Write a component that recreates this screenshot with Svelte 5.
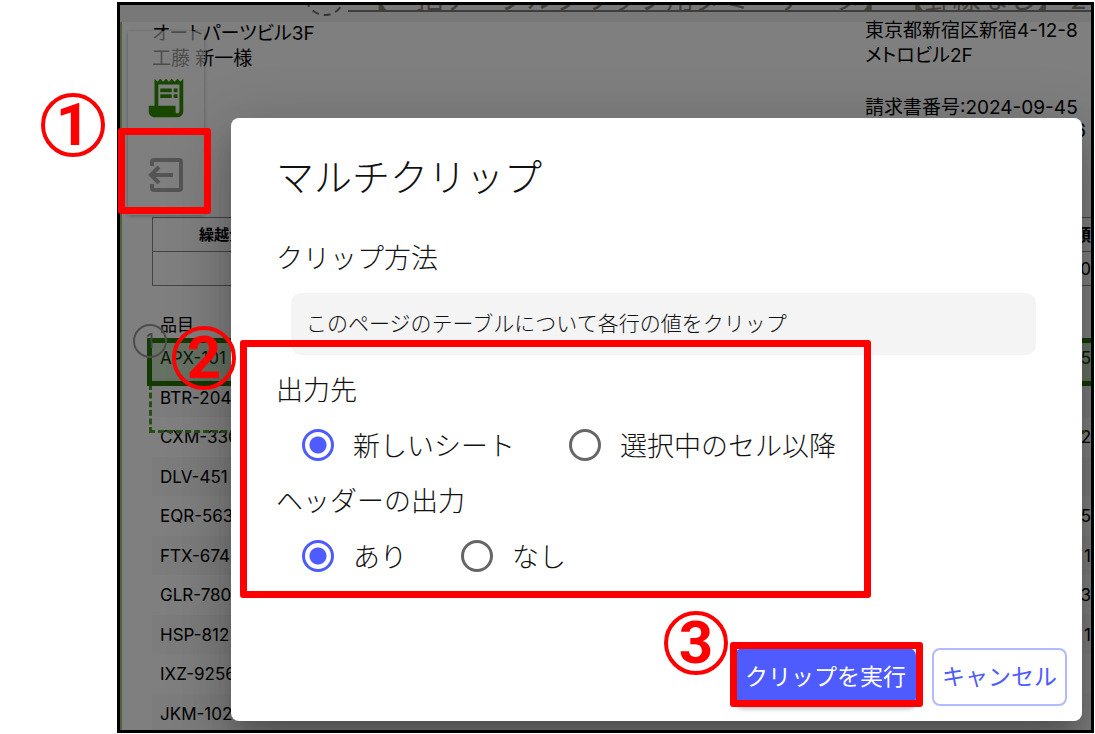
<script lang="ts">
	interface Mark {
		left: number;
		top: number;
		width: number;
		height: number;
	}

	// Red frames and numbered rings are pinned on top of the captured window
	const frames: Mark[] = [
		{ left: 118, top: 128, width: 93, height: 86 },
		{ left: 240, top: 340, width: 631, height: 258 },
		{ left: 730, top: 642, width: 193, height: 65 },
	];

	const steps = [
		{ n: 1, left: 41, top: 93 },
		{ n: 2, left: 172, top: 326 },
		{ n: 3, left: 664, top: 611 },
	];

	const items = [
		{ code: 'APX-101', amount: '5' },
		{ code: 'BTR-204', amount: '' },
		{ code: 'CXM-330', amount: '2' },
		{ code: 'DLV-451', amount: '' },
		{ code: 'EQR-563', amount: '5' },
		{ code: 'FTX-674', amount: '1' },
		{ code: 'GLR-780', amount: '3' },
		{ code: 'HSP-812', amount: '1' },
		{ code: 'IXZ-9256', amount: '' },
		{ code: 'JKM-102', amount: '' },
	];

	let target = $state('new');
	let header = $state('yes');
</script>

<main class="guide">
	<div class="window">
		<div class="topbar">
			<svg class="target" width="40" height="20" viewBox="0 0 40 20" aria-hidden="true">
				<circle cx="20" cy="-9" r="19" fill="none" stroke="#6f6f6f" stroke-width="2" stroke-dasharray="7 5" />
			</svg>
			<div class="doc-title">【一括テーブルクリップ用ダミーデータ】 【罫線なし】 2</div>
		</div>

		<div class="sheet">
			<div class="addresses">
				<div class="client">
					<div>オートパーツビル3F</div>
					<div>工藤 新一様</div>
				</div>
				<div class="sender">
					<div>東京都新宿区新宿4-12-8</div>
					<div>メトロビル2F</div>
					<div class="number">請求書番号:2024-09-45</div>
					<div class="date">2024-09-06</div>
				</div>
			</div>

			<table class="summary">
				<thead>
					<tr><th>繰越金額</th><th class="end">額</th></tr>
				</thead>
				<tbody>
					<tr><td></td><td class="end">0</td></tr>
				</tbody>
			</table>

			<div class="items">
				<table>
					<thead>
						<tr><th>品目</th><th></th></tr>
					</thead>
					<tbody>
						{#each items as item (item.code)}
							<tr><td>{item.code}</td><td class="end">{item.amount}</td></tr>
						{/each}
					</tbody>
				</table>
				<div class="next-rows"></div>
				<div class="picked-row"></div>
				<div class="row-badge">1</div>
			</div>
		</div>

		<div class="toolbar">
			<button type="button" aria-label="請求書">
				<svg width="46" height="46" viewBox="0 0 24 24" aria-hidden="true">
					<path
						fill="#338c00"
						fill-rule="evenodd"
						d="M19.5 3.5 18 2l-1.5 1.5L15 2l-1.5 1.5L12 2l-1.5 1.5L9 2 7.5 3.5 6 2v14H3v3c0 1.66 1.34 3 3 3h12c1.66 0 3-1.34 3-3V2zM19 19c0 .55-.45 1-1 1s-1-.45-1-1v-3H8V5h11zM9 7h6v2H9zM16 7h2v2h-2zM9 10h6v2H9zM16 10h2v2h-2z"
					/>
				</svg>
			</button>
			<button type="button" aria-label="クリップ">
				<svg width="36" height="36" viewBox="0 0 36 36" fill="none" stroke="#a8a8a8" stroke-width="4" aria-hidden="true">
					<path d="M4 9V5q0-2 2-2h25q2 0 2 2v26q0 2-2 2H6q-2 0-2-2v-4" />
					<path d="M25 18H4M11 10l-8 8 8 8" />
				</svg>
			</button>
		</div>

		<div class="scrim"></div>

		<div class="dialog" role="dialog" aria-labelledby="dialog-title">
			<h1 id="dialog-title">マルチクリップ</h1>
			<h2>クリップ方法</h2>
			<p class="method">このページのテーブルについて各行の値をクリップ</p>

			<fieldset>
				<legend>出力先</legend>
				<div class="choices">
					<label><input type="radio" name="target" value="new" bind:group={target} />新しいシート</label>
					<label><input type="radio" name="target" value="selected" bind:group={target} />選択中のセル以降</label>
				</div>
			</fieldset>
			<fieldset>
				<legend>ヘッダーの出力</legend>
				<div class="choices">
					<label><input type="radio" name="header" value="yes" bind:group={header} />あり</label>
					<label><input type="radio" name="header" value="no" bind:group={header} />なし</label>
				</div>
			</fieldset>

			<div class="actions">
				<button type="button" class="run">クリップを実行</button>
				<button type="button" class="cancel">キャンセル</button>
			</div>
		</div>
	</div>

	{#each frames as f}
		<div
			class="frame"
			style:left="{f.left}px"
			style:top="{f.top}px"
			style:width="{f.width}px"
			style:height="{f.height}px"
		></div>
	{/each}
	{#each steps as s (s.n)}
		<div class="step" style:left="{s.left}px" style:top="{s.top}px">{s.n}</div>
	{/each}
</main>

<style>
	:global(body) {
		background: #fff;
	}

	.guide {
		position: relative;
		box-sizing: border-box;
		height: 100vh;
		padding: 2px 1px 1px 117px;
		overflow: hidden;
		font-family: 'Noto Sans CJK JP', 'Noto Sans', sans-serif;
	}

	.guide *,
	.guide *::before {
		box-sizing: border-box;
	}

	.window {
		position: relative;
		height: 100%;
		border: 3px solid #000;
		overflow: hidden;
		background: #fff;
	}

	/* Document behind the dialog */
	.topbar {
		display: flex;
		gap: 3px;
		height: 17px;
		padding-left: 185px;
		background: #f1f1f1;
	}

	.target {
		flex: none;
	}

	.doc-title {
		display: flex;
		flex: 1;
		align-items: flex-end;
		height: 7px;
		padding-left: 12px;
		border-bottom: 2px solid #7c7c7c;
		overflow: hidden;
		font-size: 28px;
		line-height: 26px;
		color: #8b8378;
		white-space: pre;
	}

	.sheet {
		padding-left: 30px;
		border-left: 2px solid #9cc870;
		font-family: Inter, 'Noto Sans CJK JP', sans-serif;
		color: #000;
	}

	.addresses {
		display: flex;
		justify-content: space-between;
		margin-bottom: 78px;
		font-size: 19px;
		line-height: 25px;
		font-feature-settings: 'palt';
	}

	.client {
		margin-top: -1px;
	}

	.sender {
		width: 226px;
		height: 121px;
		margin-top: -4px;
		white-space: nowrap;
	}

	.number {
		margin-top: 27px;
	}

	.date {
		margin-right: 5px;
		line-height: 22px;
		text-align: right;
	}

	table {
		width: 100%;
		border-collapse: collapse;
		table-layout: fixed;
	}

	th,
	td {
		padding: 0;
		line-height: 20px;
	}

	.summary {
		margin-bottom: 26px;
		border-top: 1px solid #888;
		border-left: 1px solid #888;
	}

	.summary tr {
		height: 34px;
		border-bottom: 1px solid #888;
	}

	.summary th {
		padding-left: 46px;
		font-size: 15px;
		font-weight: 700;
		text-align: left;
	}

	.summary .end,
	.items .end {
		padding: 0;
		font-size: 17px;
		text-align: right;
	}

	.items {
		position: relative;
	}

	.items th,
	.items td {
		padding-left: 8px;
		font-size: 17px;
		font-weight: 400;
		text-align: left;
	}

	.items thead tr {
		height: 26px;
	}

	.items tbody tr {
		height: 40px;
	}

	.items tbody tr:nth-child(even) {
		height: 39px;
		background: #f8f8f8;
	}

	.picked-row {
		position: absolute;
		top: 26px;
		right: 0;
		left: -5px;
		height: 48px;
		border: 5px solid #267500;
		border-right: 0;
		background: rgb(80 160 60 / 30%);
	}

	.next-rows {
		position: absolute;
		top: 72px;
		right: 6px;
		left: -3px;
		height: 49px;
		border: 3px dashed #4a9a28;
		border-top: 0;
		border-right: 0;
	}

	.row-badge {
		position: absolute;
		top: 12px;
		left: -19px;
		width: 34px;
		height: 34px;
		border: 2px solid #999;
		border-radius: 50%;
		font-size: 20px;
		line-height: 30px;
		text-align: center;
		color: #888;
	}

	.toolbar {
		position: absolute;
		top: 26px;
		left: 8px;
		display: flex;
		flex-direction: column;
		align-items: center;
		gap: 36px;
		width: 76px;
		padding: 44px 0 22px;
		background: rgb(255 255 255 / 60%);
		box-shadow: 0 1px 4px rgb(0 0 0 / 30%);
	}

	.toolbar button {
		display: flex;
		padding: 0;
		border: 0;
		background: none;
	}

	.scrim {
		position: absolute;
		inset: 0;
		background: rgb(0 0 0 / 50%);
	}

	/* Dialog */
	.dialog {
		position: absolute;
		inset: 113px 9px 9px 111px;
		display: flex;
		flex-direction: column;
		padding: 29px 15px 15px 45px;
		border-radius: 8px;
		background: #fff;
		box-shadow:
			0 14px 20px -9px rgb(0 0 0 / 20%),
			0 32px 50px 4px rgb(0 0 0 / 14%),
			0 12px 60px 11px rgb(0 0 0 / 12%);
		font-size: 27px;
		font-weight: 300;
		line-height: 40px;
		color: #111;
	}

	h1,
	h2,
	p {
		margin: 0;
		font-weight: 300;
	}

	h1 {
		font-size: 38px;
		line-height: 56px;
	}

	h2 {
		margin-top: 34px;
		font-size: 27px;
	}

	.method {
		margin: 16px 31px 14px 15px;
		padding: 9px 15px 13px;
		border-radius: 10px;
		background: #f4f4f4;
		font-size: 21px;
	}

	fieldset {
		margin: 0;
		padding: 0;
		border: 0;
	}

	legend {
		padding: 0;
	}

	.choices {
		display: flex;
		gap: 54px;
		padding: 16px 0 15px 26px;
	}

	label {
		display: flex;
		align-items: center;
		gap: 19px;
	}

	input {
		appearance: none;
		width: 32px;
		height: 32px;
		margin: 0;
		border: 3px solid #666;
		border-radius: 50%;
	}

	input:checked {
		border-color: #4d5bff;
		background: radial-gradient(circle, #4d5bff 8px, transparent 9px);
	}

	.actions {
		display: flex;
		justify-content: flex-end;
		gap: 16px;
		margin-top: auto;
	}

	.actions button {
		height: 58px;
		padding: 0 8px 4px;
		border: 2px solid #b3b9ff;
		border-radius: 8px;
		background: #fff;
		font-family: inherit;
		font-size: 23px;
		font-weight: 400;
		color: #4d5bff;
	}

	.actions .run {
		border-color: #4d5bff;
		background: #4d5bff;
		box-shadow: 0 3px 4px rgb(0 0 0 / 25%);
		color: #fff;
	}

	/* Annotations */
	.frame {
		position: absolute;
		border: 7px solid #f00;
		border-radius: 3px;
		pointer-events: none;
	}

	.step {
		position: absolute;
		width: 64px;
		height: 64px;
		border: 4px solid #f00;
		border-radius: 50%;
		font-family: Roboto, sans-serif;
		font-size: 60px;
		font-weight: 700;
		line-height: 56px;
		text-align: center;
		color: #f00;
	}
</style>
